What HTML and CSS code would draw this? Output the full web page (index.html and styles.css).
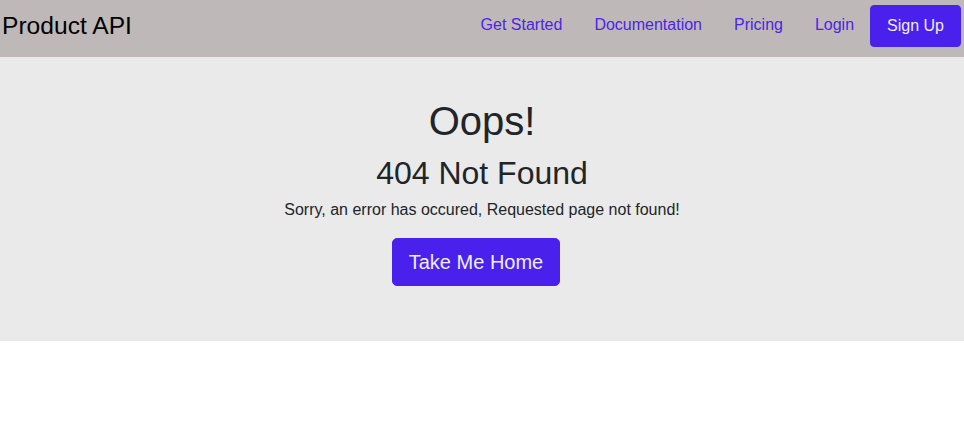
FILE: index.html
```html
<!DOCTYPE html>
<html lang="en">
<head>
<meta charset="utf-8">
<title>Product API</title>
<link rel="stylesheet" href="styles.css">
</head>
<body>
<nav class="navbar">
  <a class="brand" href="#">Product API</a>
  <ul class="nav">
    <li><a class="nav-link" href="#">Get Started</a></li>
    <li><a class="nav-link" href="#">Documentation</a></li>
    <li><a class="nav-link" href="#">Pricing</a></li>
    <li><a class="nav-link" href="#">Login</a></li>
    <li><a class="btn" href="#">Sign Up</a></li>
  </ul>
</nav>
<section class="hero">
  <h1 class="title">Oops!</h1>
  <h2 class="subtitle">404 Not Found</h2>
  <p class="lead">Sorry, an error has occured, Requested page not found!</p>
  <a class="btn btn-lg" href="#">Take Me Home</a>
</section>
</body>
</html>
```
FILE: styles.css
```css
* { box-sizing: border-box; }
html, body { margin: 0; padding: 0; }
body {
  font-family: "Liberation Sans", Arial, sans-serif;
  font-size: 16px;
  line-height: 1.5;
  color: #212529;
  background: #fff;
}
a { text-decoration: none; }
.navbar {
  display: flex;
  align-items: center;
  justify-content: space-between;
  height: 57px;
  padding: 0 3px 0 2px;
  background: #beb8b8;
}
.brand {
  font-size: 24.6px;
  color: #000;
  line-height: 1.2;
  margin-top: -6px;
}
.nav {
  display: flex;
  align-items: center;
  list-style: none;
  margin: 0;
  padding: 0;
}
.nav-link {
  display: block;
  padding: 0 16px;
  color: #4b24e8;
  margin-top: -8px;
}
.btn {
  display: inline-block;
  background: #4a20ec;
  color: #f1eeff;
  border: 1px solid #4a20ec;
  border-radius: 4px;
  padding: 8px 16px;
  font-size: 16px;
  line-height: 24px;
  margin-top: -5px;
}
.hero {
  background: #eaeaea;
  text-align: center;
  padding: 40px 0 55px;
}
.title {
  font-size: 40px;
  font-weight: 400;
  line-height: 1.2;
  margin: 0 0 9px;
}
.subtitle {
  font-size: 32px;
  font-weight: 400;
  line-height: 1.2;
  margin: 0 0 6px;
}
.lead {
  margin: 0 0 16px;
}
.btn-lg {
  font-size: 20px;
  line-height: 30px;
  padding: 8px 16px;
  border-radius: 5px;
  margin: 0 12px 0 0;
}
```
